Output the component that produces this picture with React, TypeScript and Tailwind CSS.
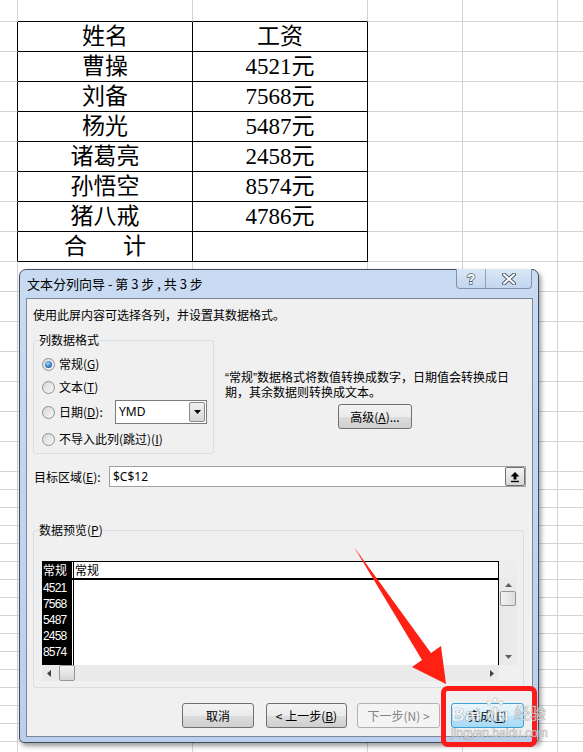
import React from 'react';

const COL_W = ['w-[18px]', 'w-[175px]', 'w-[175px]', 'w-[95px]', 'w-[95px]', 'w-[40px]'];

const ROW_H = [
  'h-[22px]',
  ...Array(15).fill('h-[30px]'),
  ...Array(16).fill('h-[18px]'),
];

const tableRows = [
  ['姓名', '工资'],
  ['曹操', '4521元'],
  ['刘备', '7568元'],
  ['杨光', '5487元'],
  ['诸葛亮', '2458元'],
  ['孙悟空', '8574元'],
  ['猪八戒', '4786元'],
];

const previewRows = ['4521', '7568', '5487', '2458', '8574'];

function Sheet() {
  return (
    <div className="flex flex-col font-['Liberation_Serif','Noto_Sans_CJK_SC',serif] text-[23px] text-black">
      {ROW_H.map((h, r) => (
        <div key={r} className={`flex shrink-0 ${h}`}>
          {COL_W.map((w, c) => {
            const inTable = r >= 1 && r <= 8;
            const right = c <= 2 && inTable ? 'border-r-black' : 'border-r-[#d4d4d4]';
            const bottom = (c === 1 || c === 2) && r <= 8 ? 'border-b-black' : 'border-b-[#d4d4d4]';
            let content: React.ReactNode = null;
            if (r >= 1 && r <= 7 && (c === 1 || c === 2)) content = tableRows[r - 1][c - 1];
            if (r === 8 && c === 1)
              content = (
                <span className="flex">
                  <span>合</span>
                  <span className="w-[36px]" />
                  <span>计</span>
                </span>
              );
            return (
              <div
                key={c}
                className={`${w} shrink-0 border-r border-b ${right} ${bottom} flex items-center justify-center leading-none`}
              >
                {content}
              </div>
            );
          })}
        </div>
      ))}
    </div>
  );
}

function Radio({ checked }: { checked?: boolean }) {
  return (
    <span className="flex h-[13px] w-[13px] shrink-0 items-center justify-center rounded-full border border-[#8e8f8f] bg-[linear-gradient(135deg,#d8d8d8,#f7f7f7)]">
      {checked && (
        <span className="h-[7px] w-[7px] rounded-full bg-[radial-gradient(circle_at_40%_35%,#9fdcff,#1f63b0_70%)]" />
      )}
    </span>
  );
}

function WinButton({
  w,
  children,
  disabled,
  focused,
  className = '',
}: {
  w: string;
  children: React.ReactNode;
  disabled?: boolean;
  focused?: boolean;
  className?: string;
}) {
  const look = disabled
    ? 'border-[#adb2b5] bg-[#f4f4f4] text-[#838383]'
    : focused
      ? 'border-[#3c9fd8] bg-[linear-gradient(180deg,#eaf6fd_0%,#d9f0fc_50%,#bee6fd_51%,#a7d9f5_100%)] text-black'
      : 'border-[#707070] bg-[linear-gradient(180deg,#f2f2f2_0%,#ebebeb_50%,#dddddd_51%,#cfcfcf_100%)] text-black';
  return (
    <div
      className={`${w} h-[25px] shrink-0 rounded-[3px] border ${look} flex items-center justify-center ${className}`}
    >
      {children}
    </div>
  );
}

function Dialog() {
  return (
    <div className="absolute left-[19px] top-[269px] flex h-[474px] w-[520px] flex-col rounded-t-[7px] rounded-b-[5px] border border-[#3e4c5e] bg-[linear-gradient(180deg,#c9dbf3,#b9cfec)] shadow-[2px_3px_5px_rgba(0,0,0,0.4)] font-['Noto_Sans_CJK_SC',sans-serif] text-[12px] text-black">
      {/* title bar */}
      <div className="flex h-[28px] shrink-0 items-start justify-between">
        <div className="pl-[7px] pt-[6px] text-[13px] leading-[16px] text-black">
          文本分列向导 - 第 3 步 , 共 3 步
        </div>
        <div className="mr-[6px] -mt-[1px] flex h-[20px] overflow-hidden rounded-b-[4px] border border-t-0 border-[#7f93ad] bg-[linear-gradient(180deg,#dbe7f6,#c3d6ee)]">
          <div className="flex w-[29px] items-center justify-center border-r border-[#8ea2bd]">
            <svg width="12" height="14" viewBox="0 0 12 14">
              <text
                x="6"
                y="12"
                textAnchor="middle"
                fontSize="14"
                fontWeight="bold"
                fontFamily="Liberation Sans, sans-serif"
                fill="#ffffff"
                stroke="#4f5b6b"
                strokeWidth="1.4"
                paintOrder="stroke"
              >
                ?
              </text>
            </svg>
          </div>
          <div className="flex w-[45px] items-center justify-center">
            <svg width="14" height="12" viewBox="0 0 14 12">
              <path d="M2 1.5 L12 10.5 M12 1.5 L2 10.5" stroke="#4f5b6b" strokeWidth="4" strokeLinecap="round" />
              <path d="M2 1.5 L12 10.5 M12 1.5 L2 10.5" stroke="#ffffff" strokeWidth="2" strokeLinecap="round" />
            </svg>
          </div>
        </div>
      </div>

      {/* client area */}
      <div className="mx-[6px] mb-[5px] mr-[5px] flex flex-1 flex-col border border-[#7a8798] bg-[#f0f0f0] px-[6px]">
        <div className="mt-[8px] h-[16px] leading-[16px]">使用此屏内容可选择各列，并设置其数据格式。</div>

        <div className="mt-[9px] flex">
          <fieldset className="h-[122px] w-[181px] shrink-0 rounded-[3px] border border-[#d5dfe5] p-0">
            <legend className="ml-[5px] leading-[16px]">列数据格式</legend>
            <div className="flex flex-col pl-[8px]">
              <div className="mt-[6px] flex h-[20px] items-center gap-[4px]">
                <Radio checked />
                <span>
                  常规(<u>G</u>)
                </span>
              </div>
              <div className="mt-[3px] flex h-[20px] items-center gap-[4px]">
                <Radio />
                <span>
                  文本(<u>T</u>)
                </span>
              </div>
              <div className="mt-[3px] flex h-[24px] items-center">
                <Radio />
                <span className="ml-[4px] w-[56px]">
                  日期(<u>D</u>):
                </span>
                <div className="flex h-[24px] w-[92px] items-center justify-between border border-[#7a7a7a] bg-white pl-[3px] pr-[1px]">
                  <span className="font-['Noto_Sans',sans-serif] text-[12px]">YMD</span>
                  <div className="flex h-[20px] w-[16px] items-center justify-center rounded-[2px] border border-[#8a8a8a] bg-[linear-gradient(180deg,#f2f2f2,#d6d6d6)]">
                    <svg width="7" height="4" viewBox="0 0 7 4">
                      <path d="M0 0 H7 L3.5 4 Z" fill="#000" />
                    </svg>
                  </div>
                </div>
              </div>
              <div className="mt-[5px] flex h-[20px] items-center gap-[4px]">
                <Radio />
                <span>
                  不导入此列(跳过)(<u>I</u>)
                </span>
              </div>
            </div>
          </fieldset>

          <div className="ml-[11px] flex flex-col pt-[38px]">
            <div className="leading-[14px]">
              <span className="font-['Liberation_Sans',sans-serif]">“</span>常规
              <span className="font-['Liberation_Sans',sans-serif]">”</span>数据格式将数值转换成数字，日期值会转换成日
              <br />
              期，其余数据则转换成文本。
            </div>
            <WinButton w="w-[74px]" className="ml-[113px] mt-[5px] h-[23px]">
              高级(<u>A</u>)...
            </WinButton>
          </div>
        </div>

        <div className="mt-[12px] flex h-[21px] items-center">
          <span className="w-[76px] shrink-0 pl-[1px]">
            目标区域(<u>E</u>):
          </span>
          <div className="flex h-[21px] w-[417px] items-center justify-between border border-[#a0a0a0] bg-white pl-[3px]">
            <span className="font-['Noto_Sans',sans-serif] text-[12px]">$C$12</span>
            <div className="flex h-[19px] w-[20px] items-center justify-center rounded-[2px] border border-[#707070] bg-[linear-gradient(180deg,#f4f4f4,#d8d8d8)]">
              <svg width="10" height="12" viewBox="0 0 10 12">
                <path d="M5 1 L9.5 5.5 H6.5 V8.5 H3.5 V5.5 H0.5 Z" fill="#000" />
                <path d="M1 10.5 H9" stroke="#000" strokeWidth="1.4" />
              </svg>
            </div>
          </div>
        </div>

        <fieldset className="mt-[35px] h-[166px] w-[491px] shrink-0 rounded-[3px] border border-[#d5dfe5] p-0">
          <legend className="ml-[5px] leading-[16px]">
            数据预览(<u>P</u>)
          </legend>
          <div className="ml-[8px] mt-[23px] grid h-[120px] w-[475px] grid-cols-[457px_18px] grid-rows-[17px_87px_16px] bg-[#ededed]">
            {/* header */}
            <div className="flex border-l border-r border-t border-black bg-white">
              <div className="flex w-[29px] items-center bg-black text-white">常规</div>
              <div className="w-[1px] bg-white" />
              <div className="w-[1px] bg-black" />
              <div className="flex items-center pl-[1px]">常规</div>
            </div>
            <div />
            {/* body */}
            <div className="flex border-l border-r border-t-2 border-black bg-white">
              <div className="flex w-[29px] flex-col bg-black font-['Liberation_Sans',sans-serif] text-[12px] tracking-[-0.8px] text-white">
                {previewRows.map((v) => (
                  <div key={v} className="flex h-[16px] items-center">
                    {v}
                  </div>
                ))}
              </div>
              <div className="w-[1px] bg-white" />
              <div className="w-[1px] bg-black" />
              <div className="flex-1" />
            </div>
            {/* vertical scrollbar */}
            <div className="flex flex-col items-center bg-[#eaeaea] pt-[5px]">
              <svg width="7" height="4" viewBox="0 0 7 4">
                <path d="M0 4 H7 L3.5 0 Z" fill="#606060" />
              </svg>
              <div className="mt-[4px] h-[15px] w-[16px] rounded-[2px] border border-[#979797] bg-[linear-gradient(90deg,#f3f3f3,#dcdcdc)]" />
              <div className="flex-1" />
              <svg width="7" height="4" viewBox="0 0 7 4" className="mb-[6px]">
                <path d="M0 0 H7 L3.5 4 Z" fill="#606060" />
              </svg>
            </div>
            {/* horizontal scrollbar */}
            <div className="flex items-center bg-[#eaeaea] pl-[5px] pr-[5px]">
              <svg width="4" height="7" viewBox="0 0 4 7">
                <path d="M4 0 V7 L0 3.5 Z" fill="#404040" />
              </svg>
              <div className="ml-[8px] h-[16px] w-[16px] rounded-[2px] border border-[#979797] bg-[linear-gradient(180deg,#f3f3f3,#d6d6d6)]" />
              <div className="flex-1" />
              <svg width="4" height="7" viewBox="0 0 4 7">
                <path d="M0 0 V7 L4 3.5 Z" fill="#404040" />
              </svg>
            </div>
            <div className="bg-[#f0f0f0]" />
          </div>
        </fieldset>

        <div className="mt-[15px] flex">
          <WinButton w="w-[72px]" className="ml-[149px]">
            取消
          </WinButton>
          <WinButton w="w-[81px]" className="ml-[12px]">
            &lt; 上一步(<u>B</u>)
          </WinButton>
          <WinButton w="w-[83px]" className="ml-[10px]" disabled>
            下一步(N) &gt;
          </WinButton>
          <WinButton w="w-[73px]" className="ml-[11px]" focused>
            完成(<u>F</u>)
          </WinButton>
        </div>
      </div>
    </div>
  );
}

function Annotation() {
  return (
    <svg className="pointer-events-none absolute left-0 top-0" width="583" height="752" viewBox="0 0 583 752">
      <polygon
        points="354,547 431,653 441,646 446,684 412,667 422,660"
        fill="#ff2214"
      />
      <rect x="443.5" y="688.5" width="91" height="56" rx="4" fill="none" stroke="#ff1a1a" strokeWidth="5" />
      <g fill="#ffffff" fillOpacity="0.8" stroke="#8c8c8c" strokeOpacity="0.55" strokeWidth="0.7">
        <text x="451" y="721" fontSize="19" fontFamily="Liberation Sans, sans-serif" fontWeight="bold">
          Bai
        </text>
        <circle cx="489" cy="703" r="2.2" />
        <circle cx="495" cy="700" r="2.2" />
        <circle cx="501" cy="703" r="2.2" />
        <circle cx="495" cy="710" r="3.4" />
        <text x="486" y="721" fontSize="19" fontFamily="Liberation Sans, sans-serif" fontWeight="bold">
          du
        </text>
        <text x="514" y="719" fontSize="16" fontFamily="Noto Sans CJK SC, sans-serif">
          经验
        </text>
        <text x="451" y="737" fontSize="12" fontFamily="Liberation Sans, sans-serif">
          jingyan.baidu.com
        </text>
      </g>
    </svg>
  );
}

export default function App() {
  return (
    <div className="relative h-[752px] w-[583px] overflow-hidden bg-white">
      <Sheet />
      <Dialog />
      <Annotation />
    </div>
  );
}
